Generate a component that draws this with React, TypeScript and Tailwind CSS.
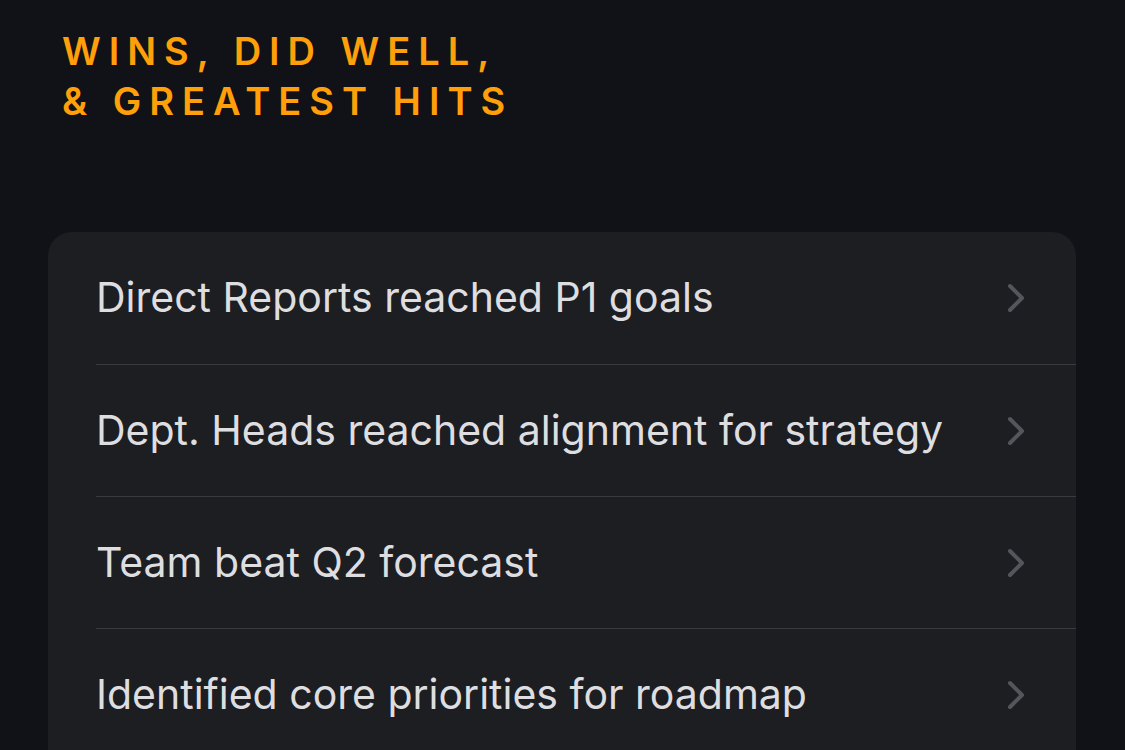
const items = [
  "Direct Reports reached P1 goals",
  "Dept. Heads reached alignment for strategy",
  "Team beat Q2 forecast",
  "Identified core priorities for roadmap",
];

function Chevron() {
  return (
    <svg width="20" height="32" viewBox="0 0 20 32" fill="none" className="shrink-0">
      <polyline
        points="4,4 16,16 4,28"
        stroke="#55565b"
        strokeWidth="4"
        strokeLinecap="round"
        strokeLinejoin="round"
      />
    </svg>
  );
}

export default function App() {
  return (
    <div className="h-screen overflow-hidden bg-[#111217] font-['Inter',sans-serif] pl-12 pr-[49px] pt-[26px]">
      <h1 className="pl-[14px] text-[38px] leading-[50px] font-semibold tracking-[0.21em] text-[#ff9f0a] uppercase">
        Wins, did well,
        <br />
        &amp; greatest hits
      </h1>

      <div className="mt-[106px] rounded-[24px] bg-[#1c1e22] pl-12 pb-12">
        {items.map((item, i) => (
          <div
            key={item}
            className={`flex h-[132px] items-center justify-between pr-[50px] ${i > 0 ? "border-t border-[#3a3b40]" : ""}`}
          >
            <span className="text-[41px] text-[#dedee0]">{item}</span>
            <Chevron />
          </div>
        ))}
      </div>
    </div>
  );
}
